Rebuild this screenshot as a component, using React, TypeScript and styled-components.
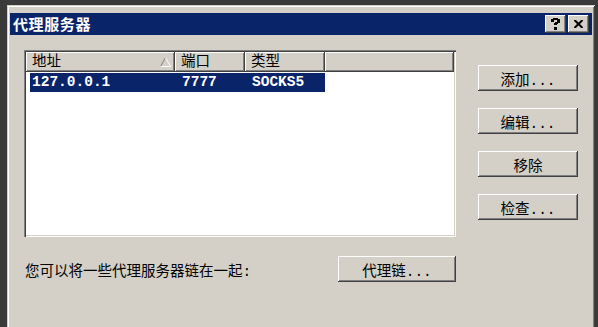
import styled, { createGlobalStyle } from "styled-components";

const GlobalStyle = createGlobalStyle`
  html, body {
    margin: 0;
    padding: 0;
    background: #3a3a3a;
    overflow: hidden;
  }
`;

const FONT = `"Liberation Mono", "Noto Sans CJK SC", monospace`;

// the dialog runs past the bottom of the shot, so no bottom edge is drawn
const Window = styled.div`
  margin: 5px 0 0 7px;
  width: 588px;
  height: calc(100vh - 5px);
  box-sizing: border-box;
  padding: 8px 3px 0 3px;
  background: #d4d0c8;
  box-shadow: inset 1px 1px #d4d0c8, inset -1px 0 #404040,
    inset 2px 2px #ffffff, inset -2px 0 #808080;
  font-family: ${FONT};
  font-size: 14.5px;
  color: #000;
`;

const TitleBar = styled.div`
  height: 22px;
  background: #0a246a;
  display: flex;
  align-items: center;
  padding: 0 3px;
`;

const Title = styled.div`
  flex: 1;
  color: #fff;
  font-family: "Noto Sans CJK SC", sans-serif;
  font-weight: bold;
  font-size: 15px;
  letter-spacing: 0.6px;
  line-height: 22px;
`;

const CaptionButtons = styled.div`
  display: flex;
  gap: 2px;
`;

const CaptionButton = styled.button`
  width: 21px;
  height: 18px;
  padding: 0;
  border: none;
  background: #d4d0c8;
  display: flex;
  align-items: center;
  justify-content: center;
  box-shadow: inset -1px -1px #404040, inset 1px 1px #ffffff,
    inset -2px -2px #808080;
`;

const Body = styled.div`
  padding: 15px 0 0 14px;
`;

const TopRow = styled.div`
  display: flex;
  align-items: flex-start;
`;

const ListView = styled.div`
  width: 432px;
  height: 187px;
  box-sizing: border-box;
  padding: 2px;
  background: #fff;
  box-shadow: inset 1px 1px #808080, inset 2px 2px #404040,
    inset -1px -1px #ffffff, inset -2px -2px #d4d0c8;
`;

const HeaderRow = styled.div`
  display: flex;
  height: 20px;
`;

const HeaderCell = styled.div<{ $w?: number }>`
  ${p => (p.$w ? `width: ${p.$w}px;` : "flex: 1;")}
  box-sizing: border-box;
  height: 20px;
  padding: 0 4px 0 6px;
  display: flex;
  align-items: center;
  justify-content: space-between;
  background: #d4d0c8;
  line-height: 20px;
  box-shadow: inset -1px -1px #404040, inset 1px 1px #ffffff,
    inset -2px -2px #808080;
`;

const Row = styled.div<{ $selected?: boolean }>`
  display: flex;
  width: 295px;
  height: 19px;
  margin: 1px 0 0 4px;
  background: ${p => (p.$selected ? "#0a246a" : "transparent")};
  color: ${p => (p.$selected ? "#fff" : "#000")};
  font-weight: bold;
  line-height: 19px;
`;

const Cell = styled.div<{ $w: number; $pad: number }>`
  width: ${p => p.$w}px;
  padding-left: ${p => p.$pad}px;
  box-sizing: border-box;
  white-space: nowrap;
`;

const ButtonColumn = styled.div`
  display: flex;
  flex-direction: column;
  gap: 17px;
  margin-left: 22px;
  padding-top: 15px;
`;

const Button = styled.button<{ $w?: number }>`
  width: ${p => p.$w ?? 100}px;
  height: 26px;
  padding: 0;
  border: none;
  background: #d4d0c8;
  font-family: ${FONT};
  font-size: 14.5px;
  color: #000;
  box-shadow: inset -1px -1px #404040, inset 1px 1px #ffffff,
    inset -2px -2px #808080, inset 2px 2px #d4d0c8;
`;

const BottomRow = styled.div`
  width: 432px;
  margin-top: 19px;
  display: flex;
  align-items: center;
  justify-content: space-between;
`;

const Label = styled.span`
  padding-left: 1px;
`;

const HelpIcon = () => (
  <svg width="9" height="12" viewBox="0 0 9 12" fill="#000">
    <rect x="2" y="0" width="5" height="2" />
    <rect x="0" y="1" width="3" height="3" />
    <rect x="6" y="1" width="3" height="4" />
    <rect x="4" y="4" width="3" height="2" />
    <rect x="3" y="5" width="3" height="2" />
    <rect x="3" y="9" width="3" height="3" />
  </svg>
);

const CloseIcon = () => (
  <svg width="9" height="8" viewBox="0 0 9 8">
    <path d="M0.5 0 L8.5 8 M8.5 0 L0.5 8" stroke="#000" strokeWidth="2" />
  </svg>
);

const SortArrow = () => (
  <svg width="11" height="10" viewBox="0 0 11 10">
    <path d="M0.5 9.5 L5.5 0.5" stroke="#808080" strokeWidth="1" fill="none" />
    <path d="M5.5 0.5 L10.5 9.5 L0.5 9.5" stroke="#ffffff" strokeWidth="1" fill="none" />
  </svg>
);

const servers = [{ address: "127.0.0.1", port: "7777", type: "SOCKS5" }];

const App = () => {
  return (
    <>
      <GlobalStyle />
      <Window>
        <TitleBar>
          <Title>代理服务器</Title>
          <CaptionButtons>
            <CaptionButton>
              <HelpIcon />
            </CaptionButton>
            <CaptionButton>
              <CloseIcon />
            </CaptionButton>
          </CaptionButtons>
        </TitleBar>
        <Body>
          <TopRow>
            <ListView>
              <HeaderRow>
                <HeaderCell $w={149}>
                  <span>地址</span>
                  <SortArrow />
                </HeaderCell>
                <HeaderCell $w={70}>端口</HeaderCell>
                <HeaderCell $w={80}>类型</HeaderCell>
                <HeaderCell />
              </HeaderRow>
              {servers.map(s => (
                <Row key={s.address} $selected>
                  <Cell $w={145} $pad={2}>
                    {s.address}
                  </Cell>
                  <Cell $w={70} $pad={7}>
                    {s.port}
                  </Cell>
                  <Cell $w={80} $pad={7}>
                    {s.type}
                  </Cell>
                </Row>
              ))}
            </ListView>
            <ButtonColumn>
              <Button>添加...</Button>
              <Button>编辑...</Button>
              <Button>移除</Button>
              <Button>检查...</Button>
            </ButtonColumn>
          </TopRow>
          <BottomRow>
            <Label>您可以将一些代理服务器链在一起:</Label>
            <Button $w={118}>代理链...</Button>
          </BottomRow>
        </Body>
      </Window>
    </>
  );
};

export default App;
